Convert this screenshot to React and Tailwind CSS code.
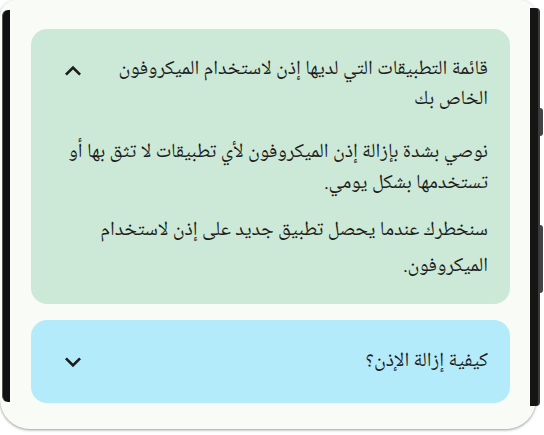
import React from 'react';

const ChevronUp = () => (
  <svg width="32" height="32" viewBox="0 0 24 24" fill="#1c1d1b">
    <path d="M7.41 15.41L12 10.83l4.59 4.58L18 14l-6-6-6 6z" />
  </svg>
);

const ChevronDown = () => (
  <svg width="32" height="32" viewBox="0 0 24 24" fill="#1c1d1b">
    <path d="M7.41 8.59L12 13.17l4.59-4.58L18 10l-6 6-6-6 1.41-1.41z" />
  </svg>
);

const font = { fontFamily: '"Noto Naskh Arabic", "Noto Sans Arabic", "DejaVu Sans", sans-serif' };

export default function App() {
  return (
    <div className="relative w-[544px] h-[435px] bg-white overflow-hidden" style={font}>
      <div className="w-[536px] h-[429px] bg-[#f9fbf6] rounded-t-[16px] rounded-b-[30px] shadow-[0_1px_3px_rgba(0,0,0,0.4)] pt-[29px] pl-[31px] pr-[26px]">
        <div dir="rtl" className="bg-[#cce8d6] rounded-[16px] h-[275px] pt-[26px] pr-[22px] pl-[18px] text-[#1c1d1b]">
          <div className="flex items-start justify-between gap-3">
            <div className="text-[20px] leading-[30px] whitespace-nowrap">
              قائمة التطبيقات التي لديها إذن لاستخدام الميكروفون
              <br />
              الخاص بك
            </div>
            <div className="ml-[8px]">
              <ChevronUp />
            </div>
          </div>
          <p className="mt-[23px] text-[20px] leading-[31px] whitespace-nowrap">
            نوصي بشدة بإزالة إذن الميكروفون لأي تطبيقات لا تثق بها أو
            <br />
            تستخدمها بشكل يومي.
          </p>
          <p className="mt-[13px] text-[20px] leading-[36px] whitespace-nowrap">
            سنخطرك عندما يحصل تطبيق جديد على إذن لاستخدام
            <br />
            الميكروفون.
          </p>
        </div>
        <div dir="rtl" className="mt-[16px] bg-[#b4ebfb] rounded-[16px] h-[83px] pr-[22px] pl-[26px] flex items-center justify-between text-[#1c1d1b]">
          <div className="text-[20px] leading-[30px]">كيفية إزالة الإذن؟</div>
          <ChevronDown />
        </div>
      </div>
      <div className="absolute left-[2px] top-[10px] w-[8px] h-[392px] bg-[#111] rounded-l-[6px] border-l border-[#555]" />
      <div className="absolute left-[530px] top-[8px] w-[10px] h-[398px] bg-[#151515] rounded-r-[4px] border-r-2 border-[#3a3a3a]" />
      <div className="absolute left-[540px] top-[108px] w-[3px] h-[28px] bg-[#444] rounded-r" />
      <div className="absolute left-[540px] top-[225px] w-[3px] h-[68px] bg-[#444] rounded-r" />
    </div>
  );
}
